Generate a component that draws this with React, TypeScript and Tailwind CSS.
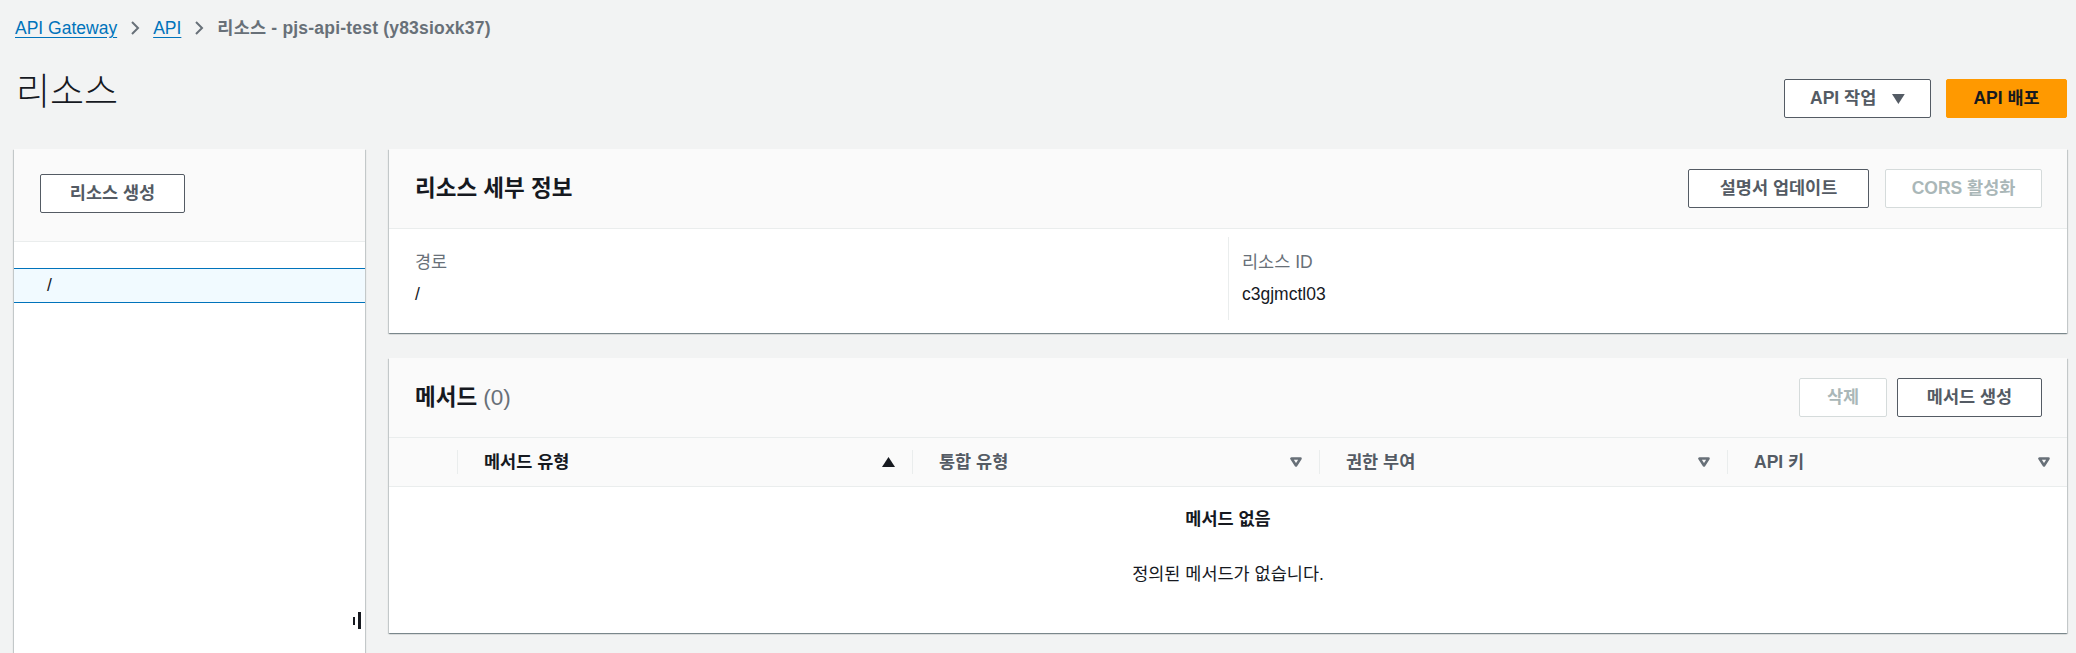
import React from 'react';

const Chevron = () => (
  <svg width="10" height="16" viewBox="0 0 10 16" className="mx-[13px]">
    <path d="M2 2l6 6-6 6" stroke="#687078" strokeWidth="2" fill="none" />
  </svg>
);

const CaretDown = () => (
  <svg width="13" height="10" viewBox="0 0 13 10">
    <path d="M0 0h13L6.5 10z" fill="#545b64" />
  </svg>
);

const SortUp = () => (
  <svg width="13" height="10" viewBox="0 0 13 10">
    <path d="M0 10h13L6.5 0z" fill="#16191f" />
  </svg>
);

const Filter = () => (
  <svg width="12" height="10" viewBox="0 0 12 10">
    <path d="M1.5 1.5h9L6 8.5z" stroke="#687078" strokeWidth="2.6" fill="none" strokeLinejoin="round" />
  </svg>
);

const btn =
  'h-[39px] px-[25px] rounded-[2px] border text-[17.5px] font-bold flex items-center justify-center whitespace-nowrap';
const panel =
  'bg-white shadow-[0_1px_1px_0_rgba(0,28,36,0.3),1px_1px_1px_0_rgba(0,28,36,0.15),-1px_1px_1px_0_rgba(0,28,36,0.15)]';

const columns = [
  { label: '메서드 유형', sorted: true, w: 'w-[455px]' },
  { label: '통합 유형', sorted: false, w: 'w-[407px]' },
  { label: '권한 부여', sorted: false, w: 'w-[408px]' },
  { label: 'API 키', sorted: false, w: 'flex-1' },
];

export default function App() {
  return (
    <div className="min-h-screen bg-[#f2f3f3] pl-[14px] pr-[9px] text-[#16191f] [font-family:'Liberation_Sans','Noto_Sans_CJK_KR',sans-serif] overflow-hidden h-[653px]">
      <nav className="h-[56px] flex items-center pl-[1px] text-[17.5px]">
        <a className="text-[#0073bb] underline underline-offset-[3px]">API Gateway</a>
        <Chevron />
        <a className="text-[#0073bb] underline underline-offset-[3px]">API</a>
        <Chevron />
        <span className="text-[#687078] font-bold tracking-[0.2px]">리소스 - pjs-api-test (y83sioxk37)</span>
      </nav>

      <div className="h-[93px] pt-[15px] flex items-start justify-between">
        <h1 className="text-[37px] leading-[44px] font-light pl-[2px]">리소스</h1>
        <div className="flex gap-[15px] mt-[8px]">
          <button className={`${btn} w-[147px] border-[#545b64] bg-white text-[#545b64] gap-[16px]`}>
            API 작업
            <CaretDown />
          </button>
          <button className={`${btn} w-[121px] border-[#ff9900] bg-[#ff9900] text-[#16191f]`}>API 배포</button>
        </div>
      </div>

      <div className="flex gap-[24px] items-start">
        <aside className={`${panel} relative w-[351px] h-[540px] shrink-0`}>
          <div className="h-[93px] bg-[#fafafa] border-b border-[#eaeded] pl-[26px] pt-[25px]">
            <button className={`${btn} h-[38px] w-[145px] border-[#545b64] bg-white text-[#545b64]`}>리소스 생성</button>
          </div>
          <div className="mt-[26px] h-[35px] border-y border-[#0073bb] bg-[#f1faff] pl-[33px] flex items-center text-[17.5px]">
            /
          </div>
          <div className="absolute left-[339px] top-[463px] flex items-center gap-[3px]">
            <span className="w-[2px] h-[8px] bg-[#16191f]" />
            <span className="w-[3px] h-[17px] bg-[#16191f]" />
          </div>
        </aside>

        <main className="flex-1 flex flex-col gap-[25px]">
          <section className={panel}>
            <div className="h-[80px] bg-[#fafafa] border-b border-[#eaeded] pl-[26px] pr-[25px] flex items-center justify-between">
              <h2 className="text-[22.5px] font-bold">리소스 세부 정보</h2>
              <div className="flex gap-[16px]">
                <button className={`${btn} w-[181px] border-[#545b64] bg-white text-[#545b64]`}>설명서 업데이트</button>
                <button className={`${btn} w-[157px] border-[#d5dbdb] bg-white text-[#aab7b8]`}>CORS 활성화</button>
              </div>
            </div>
            <div className="grid grid-cols-2 pt-[8px] pb-[13px] text-[17.5px]">
              <div className="pl-[26px] pt-[13px] h-[83px]">
                <div className="text-[#687078] leading-[25px]">경로</div>
                <div className="leading-[25px] mt-[7px]">/</div>
              </div>
              <div className="border-l border-[#eaeded] pl-[13px] pt-[13px] h-[83px]">
                <div className="text-[#687078] leading-[25px]">리소스 ID</div>
                <div className="leading-[25px] mt-[7px]">c3gjmctl03</div>
              </div>
            </div>
          </section>

          <section className={`${panel} h-[275px]`}>
            <div className="h-[80px] bg-[#fafafa] border-b border-[#eaeded] pl-[26px] pr-[25px] flex items-center justify-between">
              <h2 className="text-[22.5px] font-bold">
                메서드 <span className="font-normal text-[#687078]">(0)</span>
              </h2>
              <div className="flex gap-[10px]">
                <button className={`${btn} w-[88px] border-[#d5dbdb] bg-white text-[#aab7b8]`}>삭제</button>
                <button className={`${btn} w-[145px] border-[#545b64] bg-white text-[#545b64]`}>메서드 생성</button>
              </div>
            </div>
            <div className="h-[49px] bg-[#fafafa] border-b border-[#eaeded] flex items-center text-[17.5px] font-bold">
              <div className="w-[68px] shrink-0" />
              {columns.map((c) => (
                <div
                  key={c.label}
                  className={`${c.w} shrink-0 h-[24px] border-l border-[#eaeded] pl-[26px] pr-[17px] flex items-center justify-between`}
                >
                  <span className={c.sorted ? 'text-[#16191f]' : 'text-[#545b64]'}>{c.label}</span>
                  {c.sorted ? <SortUp /> : <Filter />}
                </div>
              ))}
            </div>
            <div className="flex flex-col items-center text-[17.5px]">
              <div className="font-bold leading-[25px] mt-[20px]">메서드 없음</div>
              <div className="leading-[25px] mt-[30px]">정의된 메서드가 없습니다.</div>
            </div>
          </section>
        </main>
      </div>
    </div>
  );
}
